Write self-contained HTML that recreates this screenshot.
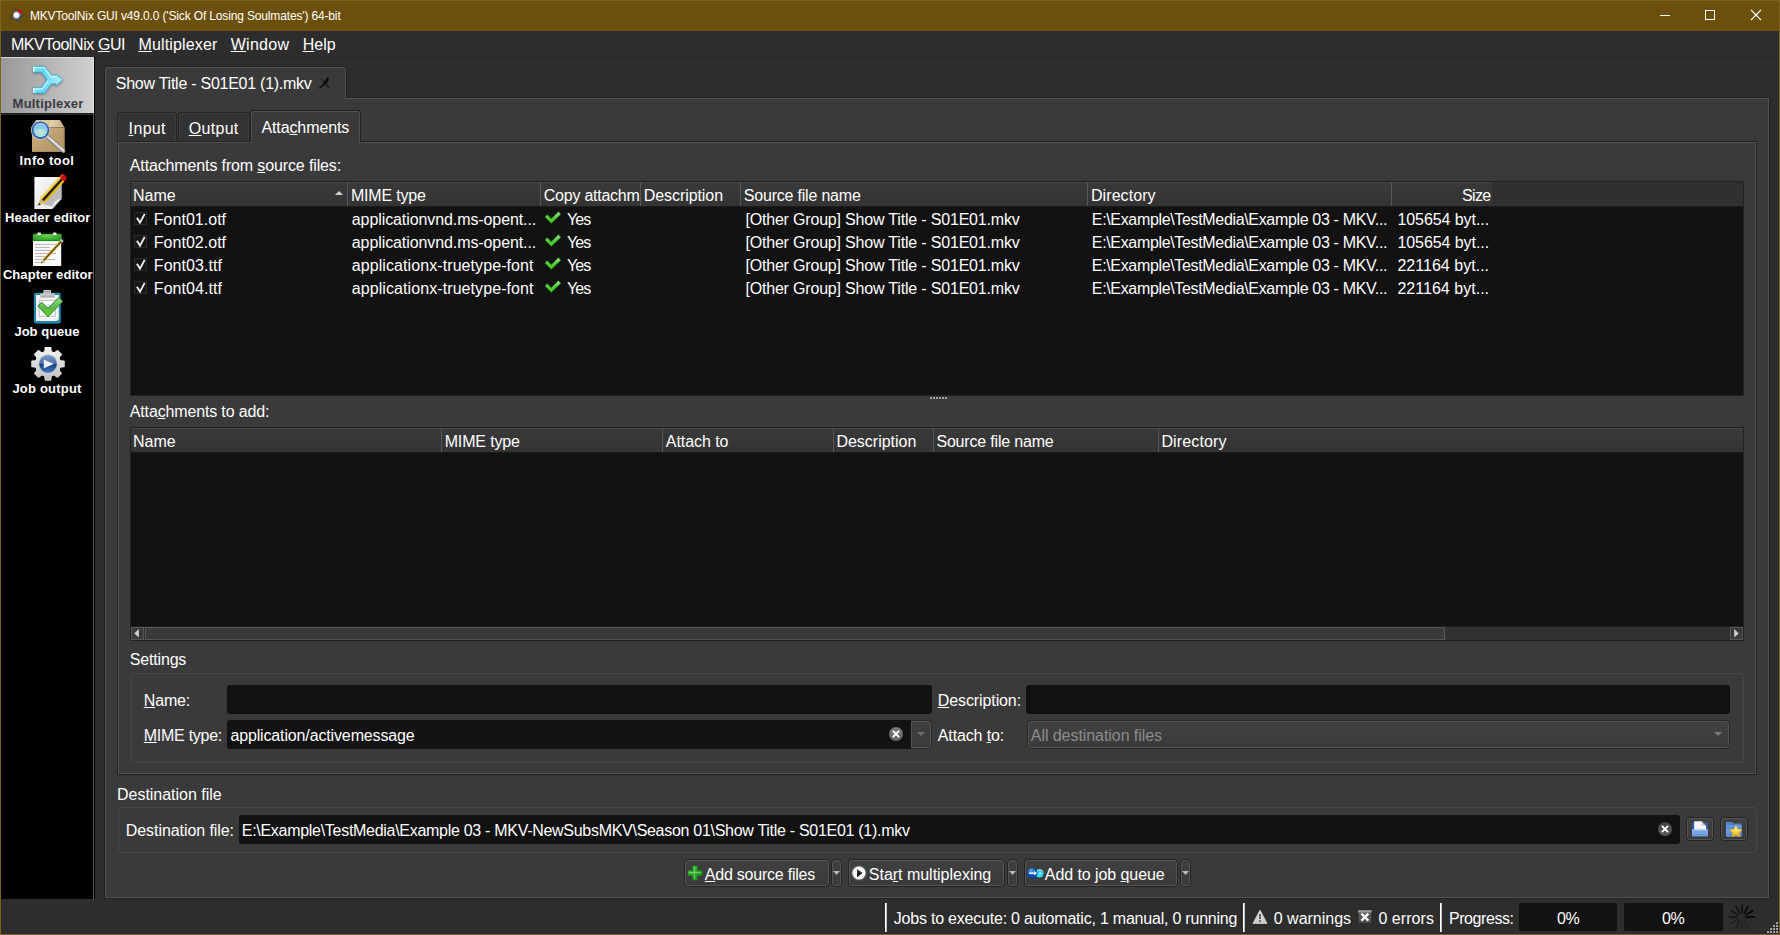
<!DOCTYPE html>
<html><head><meta charset="utf-8"><title>MKVToolNix GUI</title>
<style>

html,body{margin:0;padding:0;background:#2d2d2d;}
body{width:1780px;height:935px;overflow:hidden;font-family:"Liberation Sans",sans-serif;}
#win{position:relative;width:1780px;height:935px;overflow:hidden;background:#2d2d2d;}
#win div{position:absolute;box-sizing:border-box;}
#win svg{position:absolute;overflow:visible;}
.t{white-space:nowrap;line-height:20px;height:20px;}
u{text-decoration:underline;text-underline-offset:1px;text-decoration-thickness:1px;}
.pane{background:#3a3a3a;border:1px solid #232323;box-shadow:inset 0 0 0 1px #505050;}
.tbl{background:#121212;border:1px solid #222;}
.hd{background:linear-gradient(#393939,#343434);border-top:1px solid #474747;}
.sep{width:1px;background:#565656;}
.inp{background:#121212;border-radius:3px;}
.btn{background:linear-gradient(#404040,#3a3a3a);border:1px solid #242424;border-radius:4px;box-shadow:inset 0 0 0 1px #555;}
.gb{border:1px solid #474747;border-radius:3px;}

</style></head><body>
<div id="win">
<div style="left:0px;top:0px;width:1780px;height:935px;background:#7d6120;"></div>
<div style="left:1px;top:1px;width:1778px;height:30px;background:#6c4f0a;"></div>
<div style="left:1px;top:31px;width:1778px;height:903px;background:#2d2d2d;"></div>
<div style="left:1px;top:56px;width:1778px;height:1px;background:#282828;"></div>
<svg style="left:8px;top:6px" width="18" height="18" viewBox="0 0 18 18">
<ellipse cx="9" cy="9.5" rx="3.2" ry="7" fill="none" stroke="#4a4432" stroke-width="1" transform="rotate(-20 9 9.5)"/>
<ellipse cx="9" cy="9.5" rx="7.5" ry="3" fill="none" stroke="#4a4432" stroke-width="1" transform="rotate(-18 9 9.5)"/>
<defs><radialGradient id="ball" cx="0.4" cy="0.45" r="0.6"><stop offset="0" stop-color="#fff"/><stop offset="0.400" stop-color="#fff"/><stop offset="0.720" stop-color="#8c9adc"/><stop offset="1" stop-color="#222c78"/></radialGradient></defs>
<circle cx="9.100" cy="9.400" r="4" fill="url(#ball)"/>
<circle cx="12" cy="5.3" r="1.9" fill="#e00000"/>
</svg>
<div style="left:1660px;top:15px;width:10px;height:1px;background:#fff;"></div>
<div style="left:1705px;top:10px;width:10px;height:10px;border:1px solid #fff;"></div>
<svg style="left:1751px;top:10px" width="10" height="10" viewBox="0 0 10 10"><path d="M0 0L10 10M10 0L0 10" stroke="#fff" stroke-width="1.1" fill="none"/></svg>
<div style="left:1px;top:57px;width:94px;height:842px;background:#000;"></div>
<div style="left:93px;top:57px;width:1px;height:843px;background:#555;"></div>
<div style="left:1px;top:57px;width:93px;height:56px;background:linear-gradient(90deg,#989898,#d0d0d0);border-top:1px solid #d8d8d8;border-right:1px solid #e6e6e6;"></div>
<div style="left:1px;top:113px;width:92px;height:2px;background:linear-gradient(#151515,#303030);"></div>
<svg style="left:32px;top:63px;filter:drop-shadow(0 1px 0.800px rgba(40,40,40,0.450))" width="32" height="32" viewBox="0 0 32 32">
<defs><linearGradient id="mx" x1="0" y1="0" x2="1" y2="0"><stop offset="0" stop-color="#7fe0f9"/><stop offset="0.350" stop-color="#5ed6f7"/><stop offset="0.600" stop-color="#86e2f9"/><stop offset="1" stop-color="#b4eefb"/></linearGradient></defs>
<path d="M1.400 3.300H12.400L19.400 12.300H23.900V10.800L30.700 16.700L23.900 22.700V20.800H19.400L12.400 30.100H1.400V24.700H9.400L15.200 16.700L9.400 9.100H1.400Z" fill="url(#mx)" stroke="#3cb7e0" stroke-width="0.900" stroke-linejoin="round"/>
<path d="M2.200 4.700H12L18.800 13.500H24.300" fill="none" stroke="#d4f6fd" stroke-width="1.300" opacity="0.850"/>
<path d="M2.200 26H10.200L16.200 17.800" fill="none" stroke="#d4f6fd" stroke-width="1.300" opacity="0.850"/>
<path d="M1.700 3.600v5.200M1.700 25v4.800" stroke="#f0fcff" stroke-width="1.300"/>
</svg>
<svg style="left:30px;top:118px" width="36" height="36" viewBox="30 118 36 36">
<defs>
<linearGradient id="bxf" x1="0" y1="0" x2="1" y2="1"><stop offset="0" stop-color="#c9ad83"/><stop offset="1" stop-color="#b3935f"/></linearGradient>
<linearGradient id="bxt" x1="0" y1="0" x2="1" y2="0"><stop offset="0" stop-color="#cdb58e"/><stop offset="0.6" stop-color="#e2cfae"/><stop offset="1" stop-color="#c8ab7e"/></linearGradient>
<radialGradient id="lens" cx="0.5" cy="0.65" r="0.6"><stop offset="0" stop-color="#c9e8c8"/><stop offset="0.5" stop-color="#a4dde0"/><stop offset="1" stop-color="#7cc4e8"/></radialGradient>
<linearGradient id="hnd" x1="0" y1="0" x2="1" y2="0"><stop offset="0" stop-color="#8d8d8d"/><stop offset="0.5" stop-color="#f0f0f0"/><stop offset="1" stop-color="#9a9a9a"/></linearGradient>
</defs>
<path d="M36 120H60L64.500 127.600H32Z" fill="url(#bxt)"/>
<rect x="32" y="127.600" width="32.500" height="24.300" fill="url(#bxf)"/>
<path d="M46.800 120h2.200l0.400 7.600h-3z" fill="#e2c867" opacity="0.800"/>
<path d="M63.600 127.600h0.900v24.300h-0.900z" fill="#a98a58"/>
<line x1="48" y1="137.300" x2="63.400" y2="150.800" stroke="#777" stroke-width="4.200" stroke-linecap="round"/>
<line x1="48" y1="137.300" x2="63.400" y2="150.800" stroke="#cdcdcd" stroke-width="2.700" stroke-linecap="round"/>
<line x1="48.700" y1="136.900" x2="64" y2="150.300" stroke="#f6f6f6" stroke-width="1"/>
<circle cx="40.500" cy="130.200" r="9.600" fill="#c4c6cc"/>
<circle cx="40.500" cy="130.200" r="8.700" fill="#2f57a6"/>
<circle cx="40.500" cy="130.200" r="7.100" fill="url(#lens)"/>
<path d="M33.600 128.800a7.100 7.100 0 0 1 13.800 0z" fill="#86c2ee" opacity="0.900"/>
<path d="M34.800 126.500a7 7 0 0 1 11.400 0" fill="none" stroke="#cfe8fa" stroke-width="0.800" opacity="0.700"/>
</svg>
<svg style="left:30px;top:172px" width="38" height="40" viewBox="30 172 38 40">
<defs>
<linearGradient id="pp" x1="0" y1="0" x2="1" y2="1"><stop offset="0" stop-color="#ffffff"/><stop offset="0.5" stop-color="#e9e9e9"/><stop offset="1" stop-color="#f8f8f8"/></linearGradient>
<linearGradient id="fold" x1="0" y1="0" x2="1" y2="1"><stop offset="0" stop-color="#ffffff"/><stop offset="1" stop-color="#bdbdbd"/></linearGradient>
</defs>
<path d="M34.400 177H61.600V198.800L52.200 209H34.400Z" fill="url(#pp)"/>
<path d="M61.600 198.800C57 199.500 53.500 201 52.200 209C53 204 54 201.500 61.600 198.800Z" fill="#999"/>
<path d="M61.600 198.600C56 199 53 201 52.200 209L61.600 198.600Z" fill="url(#fold)"/>
<path d="M43 204.500L60.800 184L61.200 198.500C56 199.500 53.500 201.500 52.600 206.500Z" fill="#8a8a8a" opacity="0.500"/>
<g transform="translate(38.100 205.600) rotate(-48)">
<path d="M0 0L7 -3.200V3.200Z" fill="#d9b76a"/>
<path d="M0 0L2.600 -1.200V1.200Z" fill="#2a2620"/>
<rect x="7" y="-3.400" width="28.500" height="6.800" fill="#efb912"/>
<rect x="7" y="-3.400" width="28.500" height="1.700" fill="#f8d654"/>
<rect x="7" y="-1.200" width="28.500" height="2.500" fill="#222228"/>
<path d="M35.500 -3.400h2.600c1.900 0 2.500 1.500 2.500 3.400s-0.600 3.400 -2.500 3.400h-2.600z" fill="#d00808"/>
<path d="M35.500 -3.400h2.600c1.200 0 2 0.600 2.300 1.600h-4.900z" fill="#ee4a3a"/>
</g>
</svg>
<svg style="left:30px;top:229px" width="38" height="40" viewBox="30 229 38 40">
<defs>
<radialGradient id="grn" cx="0.5" cy="0.3" r="0.7"><stop offset="0" stop-color="#6fd04a"/><stop offset="1" stop-color="#1f9a1f"/></radialGradient>
</defs>
<rect x="33" y="234" width="28.200" height="32" fill="#fafafa"/>
<rect x="33" y="233.800" width="28.200" height="7.200" fill="url(#grn)"/>
<rect x="33" y="240.300" width="28.200" height="0.800" fill="#178a17"/>
<rect x="35" y="243.9" width="21" height="1" fill="#b4b4b4"/><rect x="35" y="246.9" width="15" height="1" fill="#b4b4b4"/><rect x="35" y="249.9" width="16" height="1" fill="#b4b4b4"/><rect x="35" y="253.0" width="21" height="1" fill="#b4b4b4"/><rect x="35" y="255.9" width="10" height="1" fill="#b4b4b4"/><rect x="35" y="259.0" width="20" height="1" fill="#b4b4b4"/><rect x="35" y="261.9" width="9.5" height="1" fill="#b4b4b4"/>
<rect x="37.400" y="232.600" width="3.600" height="3.400" rx="0.800" fill="#e8e0e8"/><rect x="52.900" y="232.600" width="3.600" height="3.400" rx="0.800" fill="#e8e0e8"/>
<rect x="37.400" y="235.400" width="3.600" height="1" fill="#2f8a2f"/><rect x="52.900" y="235.400" width="3.600" height="1" fill="#2f8a2f"/>
<g transform="translate(40.700 263.600) rotate(-47.200)">
<path d="M0 0L4.500 -1.400V1.400Z" fill="#d9b76a"/>
<path d="M0 0L2 -0.700V0.700Z" fill="#222"/>
<rect x="4.500" y="-1.500" width="26.500" height="3" fill="#e8b21c"/>
<rect x="4.500" y="-0.500" width="26.500" height="1" fill="#2a2a2a"/>
<rect x="30.500" y="-1.600" width="1.800" height="3.200" fill="#cfcfcf"/>
<rect x="32.300" y="-1.600" width="2.200" height="3.200" rx="0.800" fill="#1a1a1a"/>
</g>
</svg>
<svg style="left:30px;top:286px" width="38" height="40" viewBox="30 286 38 40">
<defs>
<linearGradient id="chk" x1="0" y1="0" x2="0" y2="1"><stop offset="0" stop-color="#9bdc8c"/><stop offset="0.55" stop-color="#58b848"/><stop offset="1" stop-color="#5fd420"/></linearGradient>
<linearGradient id="clp" x1="0" y1="0" x2="0" y2="1"><stop offset="0" stop-color="#d8d8d8"/><stop offset="1" stop-color="#a0a0a0"/></linearGradient>
</defs>
<rect x="33.900" y="292.800" width="26.800" height="30.600" rx="1.800" fill="#1b80a6"/>
<rect x="34.600" y="293.500" width="25.400" height="29.200" rx="1.400" fill="none" stroke="#2e9cc4" stroke-width="0.700"/>
<path d="M36 295H58.800V318C58.800 320 58 321 56 321H36Z" fill="#f3f3f3"/>
<path d="M58.800 316.500C58.500 319 57.500 320.600 54.500 321H56.800L58.800 319Z" fill="#c8c8c8"/>
<rect x="39.300" y="300.300" width="16" height="16" fill="#fbfbfb" stroke="#b3bac2" stroke-width="0.900"/>
<rect x="40.200" y="293.500" width="14.400" height="4" rx="0.600" fill="url(#clp)"/>
<rect x="43.300" y="290" width="7.700" height="4" rx="0.800" fill="#c4c4c4"/>
<rect x="44.300" y="291" width="5.700" height="1.200" fill="#9a9a9a"/>
<path d="M37.900 306L41.600 302.200L48 308.200L58.800 297.500L62.800 301.300L48 316.800Z" fill="url(#chk)" stroke="#27851c" stroke-width="1" stroke-linejoin="round"/>
</svg>
<svg style="left:30px;top:345px" width="36" height="38" viewBox="30 345 36 38">
<defs>
<linearGradient id="gr" x1="0" y1="0" x2="0" y2="1"><stop offset="0" stop-color="#f0f0f0"/><stop offset="1" stop-color="#c4c4c4"/></linearGradient>
<linearGradient id="bl" x1="0" y1="0" x2="0" y2="1"><stop offset="0" stop-color="#7f9cc8"/><stop offset="0.500" stop-color="#4a6ca8"/><stop offset="0.520" stop-color="#173f80"/><stop offset="1" stop-color="#3f78c0"/></linearGradient>
</defs>
<path d="M44.84 352.01L45.42 347.91L50.58 347.91L51.16 352.01L54.17 353.26L57.48 350.77L61.13 354.42L58.64 357.73L59.89 360.74L63.99 361.32L63.99 366.48L59.89 367.06L58.64 370.07L61.13 373.38L57.48 377.03L54.17 374.54L51.16 375.79L50.58 379.89L45.42 379.89L44.84 375.79L41.83 374.54L38.52 377.03L34.87 373.38L37.36 370.07L36.11 367.06L32.01 366.48L32.01 361.32L36.11 360.74L37.36 357.73L34.87 354.42L38.52 350.77L41.83 353.26Z" fill="url(#gr)" stroke="url(#gr)" stroke-width="1.600" stroke-linejoin="round"/>
<circle cx="48.0" cy="363.9" r="12.800" fill="url(#gr)"/>
<circle cx="48.0" cy="363.9" r="9.700" fill="#cfcfcf"/>
<circle cx="48.0" cy="363.9" r="8.900" fill="url(#bl)"/>
<path d="M44.200 360.200V367.700L52.900 363.900Z" fill="#f4f4f4" stroke="#f4f4f4" stroke-width="0.800" stroke-linejoin="round"/>
</svg>
<div style="left:104px;top:97px;width:1666px;height:802px;"></div>
<div class="pane" style="left:104px;top:97px;width:1666px;height:802px;"></div>
<div style="left:104px;top:66px;width:243px;height:32px;background:#3a3a3a;border:1px solid #232323;border-bottom:none;border-radius:3px 3px 0 0;box-shadow:inset 1px 1px 0 #505050,inset -1px 0 0 #505050;"></div>
<div style="left:106px;top:97px;width:239px;height:2px;background:#3a3a3a;"></div>
<div style="left:105px;top:97px;width:1px;height:2px;background:#505050;"></div>
<div style="left:345px;top:97px;width:1px;height:1px;background:#505050;"></div>
<svg style="left:316px;top:75px" width="16" height="16" viewBox="316 75 16 16"><path d="M319.600 77.200C322.200 80.200 325.600 84.600 327.400 87.400C328.400 88.600 330.200 87.800 329.400 86.400C327.600 83.800 323.200 79.800 319.600 77.200Z" fill="#1e1e1e"/><path d="M317.900 88.700C321.200 86.400 325.200 82 326.800 78C327.600 76.800 329.200 77.400 328.800 78.900C327.400 83.200 322.600 87.200 317.900 88.700Z" fill="#050505"/></svg>
<div class="pane" style="left:117px;top:141px;width:1640px;height:634px;"></div>
<div style="left:117px;top:112px;width:60px;height:29px;background:#333;border:1px solid #232323;border-bottom:none;border-radius:3px 3px 0 0;box-shadow:inset 1px 1px 0 #3f3f3f,inset -1px 0 0 #3f3f3f;"></div>
<div style="left:178px;top:112px;width:72px;height:29px;background:#333;border:1px solid #232323;border-bottom:none;border-radius:3px 3px 0 0;box-shadow:inset 1px 1px 0 #3f3f3f,inset -1px 0 0 #3f3f3f;"></div>
<div style="left:250px;top:110px;width:111px;height:32px;background:#3a3a3a;border:1px solid #232323;border-bottom:none;border-radius:3px 3px 0 0;box-shadow:inset 1px 1px 0 #505050,inset -1px 0 0 #505050;"></div>
<div style="left:252px;top:141px;width:107px;height:2px;background:#3a3a3a;"></div>
<div style="left:251px;top:141px;width:1px;height:2px;background:#505050;"></div>
<div style="left:359px;top:141px;width:1px;height:1px;background:#505050;"></div>
<div class="tbl" style="left:130px;top:181px;width:1614px;height:215px;"></div>
<div style="left:131px;top:182px;width:1612px;height:24px;background:#303030;"></div>
<div class="hd" style="left:131px;top:182px;width:1361px;height:24px;"></div>
<div style="left:131px;top:206px;width:1612px;height:1px;background:#1b1b1b;"></div>
<div class="sep" style="left:347px;top:182px;height:24px;"></div>
<div class="sep" style="left:540px;top:182px;height:24px;"></div>
<div class="sep" style="left:640px;top:182px;height:24px;"></div>
<div class="sep" style="left:740px;top:182px;height:24px;"></div>
<div class="sep" style="left:1087px;top:182px;height:24px;"></div>
<div class="sep" style="left:1391px;top:182px;height:24px;"></div>
<svg style="left:335px;top:191px" width="8" height="4" viewBox="0 0 8 4"><path d="M0 4L4 0L8 4Z" fill="#d2d2d2"/></svg>
<svg width="0" height="0" style="left:0;top:0"><defs><linearGradient id="ckg" x1="0" y1="0" x2="0" y2="1"><stop offset="0" stop-color="#a4e496"/><stop offset="0.550" stop-color="#52c83a"/><stop offset="1" stop-color="#3ed412"/></linearGradient></defs></svg>
<div style="left:134px;top:212px;width:13px;height:13px;border:1px solid #2c2c2c;background:#161616;"></div>
<svg style="left:136px;top:212px" width="10" height="12" viewBox="0 0 10 12"><path d="M0.900 5.800L4 10.600L8.700 1.900" stroke="#ececec" stroke-width="1.900" fill="none"/></svg>
<svg style="left:544px;top:211px" width="18" height="14" viewBox="544 211 18 14"><path d="M545.100 217.100L547.200 214.700L551.300 218.800L558.400 211.800L560.800 214.200L551.300 223.200Z" fill="url(#ckg)" stroke="#1f9414" stroke-width="0.700" stroke-linejoin="round"/></svg>
<div style="left:134px;top:235px;width:13px;height:13px;border:1px solid #2c2c2c;background:#161616;"></div>
<svg style="left:136px;top:235px" width="10" height="12" viewBox="0 0 10 12"><path d="M0.900 5.800L4 10.600L8.700 1.900" stroke="#ececec" stroke-width="1.900" fill="none"/></svg>
<svg style="left:544px;top:234px" width="18" height="14" viewBox="544 211 18 14"><path d="M545.100 217.100L547.200 214.700L551.300 218.800L558.400 211.800L560.800 214.200L551.300 223.200Z" fill="url(#ckg)" stroke="#1f9414" stroke-width="0.700" stroke-linejoin="round"/></svg>
<div style="left:134px;top:258px;width:13px;height:13px;border:1px solid #2c2c2c;background:#161616;"></div>
<svg style="left:136px;top:258px" width="10" height="12" viewBox="0 0 10 12"><path d="M0.900 5.800L4 10.600L8.700 1.900" stroke="#ececec" stroke-width="1.900" fill="none"/></svg>
<svg style="left:544px;top:257px" width="18" height="14" viewBox="544 211 18 14"><path d="M545.100 217.100L547.200 214.700L551.300 218.800L558.400 211.800L560.800 214.200L551.300 223.200Z" fill="url(#ckg)" stroke="#1f9414" stroke-width="0.700" stroke-linejoin="round"/></svg>
<div style="left:134px;top:281px;width:13px;height:13px;border:1px solid #2c2c2c;background:#161616;"></div>
<svg style="left:136px;top:281px" width="10" height="12" viewBox="0 0 10 12"><path d="M0.900 5.800L4 10.600L8.700 1.900" stroke="#ececec" stroke-width="1.900" fill="none"/></svg>
<svg style="left:544px;top:280px" width="18" height="14" viewBox="544 211 18 14"><path d="M545.100 217.100L547.200 214.700L551.300 218.800L558.400 211.800L560.800 214.200L551.300 223.200Z" fill="url(#ckg)" stroke="#1f9414" stroke-width="0.700" stroke-linejoin="round"/></svg>
<div style="left:930px;top:397px;width:2px;height:2px;background:linear-gradient(135deg,#8a8a8a,#b4b4b4);"></div>
<div style="left:933px;top:397px;width:2px;height:2px;background:linear-gradient(135deg,#8a8a8a,#b4b4b4);"></div>
<div style="left:936px;top:397px;width:2px;height:2px;background:linear-gradient(135deg,#8a8a8a,#b4b4b4);"></div>
<div style="left:939px;top:397px;width:2px;height:2px;background:linear-gradient(135deg,#8a8a8a,#b4b4b4);"></div>
<div style="left:942px;top:397px;width:2px;height:2px;background:linear-gradient(135deg,#8a8a8a,#b4b4b4);"></div>
<div style="left:945px;top:397px;width:2px;height:2px;background:linear-gradient(135deg,#8a8a8a,#b4b4b4);"></div>
<div class="tbl" style="left:130px;top:427px;width:1614px;height:214px;"></div>
<div class="hd" style="left:131px;top:428px;width:1612px;height:24px;"></div>
<div style="left:131px;top:452px;width:1612px;height:1px;background:#1b1b1b;"></div>
<div class="sep" style="left:441px;top:428px;height:24px;"></div>
<div class="sep" style="left:662px;top:428px;height:24px;"></div>
<div class="sep" style="left:833px;top:428px;height:24px;"></div>
<div class="sep" style="left:933px;top:428px;height:24px;"></div>
<div class="sep" style="left:1158px;top:428px;height:24px;"></div>
<div style="left:131px;top:626px;width:1612px;height:14px;background:#313131;border-top:1px solid #1d1d1d;"></div>
<div style="left:131px;top:627px;width:13px;height:13px;background:#3a3a3a;border:1px solid #575757;"></div>
<div style="left:1730px;top:627px;width:13px;height:13px;background:#3a3a3a;border:1px solid #575757;"></div>
<div style="left:145px;top:627px;width:1300px;height:13px;background:#3a3a3a;border:1px solid #575757;"></div>
<svg style="left:134px;top:629px" width="5" height="9" viewBox="0 0 5 9"><path d="M4.800 0L0.300 4.400L4.800 8.600Z" fill="#d2d2d2"/></svg>
<svg style="left:1734px;top:629px" width="5" height="9" viewBox="0 0 5 9"><path d="M0.200 0L4.700 4.400L0.200 8.600Z" fill="#d2d2d2"/></svg>
<div class="gb" style="left:131px;top:673px;width:1613px;height:90px;"></div>
<div class="inp" style="left:227px;top:685px;width:705px;height:29px;"></div>
<div class="inp" style="left:1026px;top:685px;width:704px;height:29px;"></div>
<div class="inp" style="left:227px;top:720px;width:685px;height:29px;border-radius:3px 0 0 3px;"></div>
<div style="left:911px;top:720px;width:21px;height:29px;background:linear-gradient(#404040,#3a3a3a);border:1px solid #2a2a2a;border-left:none;border-radius:0 4px 4px 0;box-shadow:inset -1px 0 0 #555,inset 0 1px 0 #555,inset 0 -1px 0 #555,inset 1px 0 0 #555;"></div>
<svg style="left:917px;top:732px" width="8" height="4" viewBox="0 0 8 4"><path d="M0 0L8 0L4 4Z" fill="#6e6e6e"/></svg>
<svg style="left:889px;top:727px" width="14" height="14" viewBox="0 0 14 14"><defs><linearGradient id="cg1" x1="0" y1="0" x2="0" y2="1"><stop offset="0" stop-color="#7a7a7a"/><stop offset="1" stop-color="#666"/></linearGradient></defs><circle cx="7" cy="7" r="7" fill="url(#cg1)"/><path d="M3.900 3.900L10.100 10.100M10.100 3.900L3.900 10.100" stroke="#fff" stroke-width="1.900"/></svg>
<div style="left:1027px;top:720px;width:703px;height:29px;background:linear-gradient(#414141,#3a3a3a);border:1px solid #282828;border-radius:4px;box-shadow:inset 0 0 0 1px #545454;"></div>
<svg style="left:1714px;top:732px" width="8" height="4" viewBox="0 0 8 4"><path d="M0 0L8 0L4 4Z" fill="#7a7a7a"/></svg>
<div class="gb" style="left:118px;top:807px;width:1639px;height:46px;"></div>
<div class="inp" style="left:239px;top:815px;width:1441px;height:29px;"></div>
<svg style="left:1658px;top:822px" width="14" height="14" viewBox="0 0 14 14"><defs><linearGradient id="cg2" x1="0" y1="0" x2="0" y2="1"><stop offset="0" stop-color="#444"/><stop offset="1" stop-color="#5a5a5a"/></linearGradient></defs><circle cx="7" cy="7" r="7" fill="url(#cg2)"/><path d="M3.900 3.900L10.100 10.100M10.100 3.900L3.900 10.100" stroke="#fff" stroke-width="1.900"/></svg>
<div class="btn" style="left:1686px;top:817px;width:28px;height:24px;"></div>
<div class="btn" style="left:1720px;top:817px;width:28px;height:24px;"></div>
<svg style="left:1691px;top:820px" width="18" height="18" viewBox="1691 820 18 18"><defs><linearGradient id="fo" x1="0" y1="0" x2="0" y2="1"><stop offset="0" stop-color="#9cc0ee"/><stop offset="1" stop-color="#6f9fe0"/></linearGradient></defs><path d="M1692.200 822.500h15.600v13.800h-15.600z" fill="#2f5fb0"/><path d="M1694.200 821.300h7.600l4.200 4.300v5.400h-11.800z" fill="#f4f4f4"/><path d="M1701.800 821.300l4.200 4.300h-4.200z" fill="#c9c9c9"/><path d="M1701.800 821.300l4.200 4.300" stroke="#333" stroke-width="0.500"/><rect x="1692" y="829.400" width="16" height="7" fill="url(#fo)"/><rect x="1692" y="831.600" width="16" height="0.800" fill="#5c8ad0"/><rect x="1692" y="834" width="16" height="0.800" fill="#5c8ad0"/></svg>
<svg style="left:1725px;top:820px" width="18" height="18" viewBox="1725 820 18 18"><defs><linearGradient id="st" x1="0" y1="0" x2="0" y2="1"><stop offset="0" stop-color="#fff6d0"/><stop offset="0.500" stop-color="#ffd84a"/><stop offset="1" stop-color="#f0a400"/></linearGradient></defs><path d="M1726 822h6.500l1 1.400h8v13h-15.500z" fill="#4f80cc"/><rect x="1726" y="825.400" width="15.500" height="11" fill="#6c9ade"/><rect x="1726" y="827.600" width="15.500" height="0.800" fill="#4f80cc"/><rect x="1726" y="834" width="15.500" height="0.800" fill="#4f80cc"/><path d="M1735.900 825.200l1.900 3.900l4.300 0.600l-3.100 3l0.700 4.300l-3.800-2l-3.800 2l0.700-4.300l-3.100-3l4.300-0.600z" fill="url(#st)" stroke="#e8a800" stroke-width="0.500"/></svg>
<div class="btn" style="left:684px;top:859px;width:146px;height:28px;"></div>
<div class="btn" style="left:831px;top:859px;width:11px;height:28px;"></div>
<svg style="left:833.0px;top:871px" width="7" height="4" viewBox="0 0 7 4"><path d="M0 0L7 0L3.5 4Z" fill="#b8b8b8"/></svg>
<div class="btn" style="left:848px;top:859px;width:157px;height:28px;"></div>
<div class="btn" style="left:1007px;top:859px;width:11px;height:28px;"></div>
<svg style="left:1009.0px;top:871px" width="7" height="4" viewBox="0 0 7 4"><path d="M0 0L7 0L3.5 4Z" fill="#b8b8b8"/></svg>
<div class="btn" style="left:1024px;top:859px;width:154px;height:28px;"></div>
<div class="btn" style="left:1180px;top:859px;width:11px;height:28px;"></div>
<svg style="left:1182.0px;top:871px" width="7" height="4" viewBox="0 0 7 4"><path d="M0 0L7 0L3.5 4Z" fill="#b8b8b8"/></svg>
<svg style="left:687px;top:865px" width="16" height="16" viewBox="687 865 16 16"><defs><linearGradient id="pl" x1="0" y1="0" x2="1" y2="1"><stop offset="0" stop-color="#49c43f"/><stop offset="1" stop-color="#0f8f0f"/></linearGradient></defs><path d="M692.800 866h4.400v4.800h4.800v4.400h-4.800v4.800h-4.400v-4.800h-4.800v-4.400h4.800z" fill="url(#pl)" stroke="#1d9a1d" stroke-width="0.600" stroke-linejoin="round"/><path d="M694.400 867v11.800M689 872.500h11.800" stroke="#8fe27f" stroke-width="1" opacity="0.700" fill="none"/></svg>
<svg style="left:851px;top:865px" width="16" height="16" viewBox="851 865 16 16"><defs><linearGradient id="pt" x1="0" y1="0" x2="0" y2="1"><stop offset="0" stop-color="#6a6a6a"/><stop offset="0.500" stop-color="#222"/><stop offset="1" stop-color="#000"/></linearGradient></defs><circle cx="859" cy="873" r="7.600" fill="#6c6c6c"/><circle cx="859" cy="873" r="6.500" fill="#fdfdfd"/><path d="M857 868.800v8.400l5.600-4.200z" fill="url(#pt)"/></svg>
<svg style="left:1026px;top:866px" width="18" height="14" viewBox="1026 866 18 14"><defs><radialGradient id="q1" cx="0.400" cy="0.250" r="0.800"><stop offset="0" stop-color="#6aa6ea"/><stop offset="0.500" stop-color="#0a58c0"/><stop offset="1" stop-color="#06399a"/></radialGradient><radialGradient id="q2" cx="0.500" cy="0.800" r="0.800"><stop offset="0" stop-color="#30f0ff"/><stop offset="0.600" stop-color="#28c4e4"/><stop offset="1" stop-color="#9adcf0"/></radialGradient></defs><circle cx="1039.400" cy="873.300" r="4.300" fill="url(#q2)"/><circle cx="1032.200" cy="873.200" r="5.200" fill="url(#q1)"/><path d="M1029 872.600h5v-1.600l3.200 2.300l-3.200 2.300v-1.600h-5z" fill="#fff"/><rect x="1039.200" y="872.600" width="2" height="1.300" fill="#eaffff"/></svg>
<div style="left:885px;top:903px;width:2px;height:29px;background:linear-gradient(90deg,#fff 50%,#c4c4c4 50%);"></div>
<div style="left:1243px;top:903px;width:2px;height:29px;background:linear-gradient(90deg,#fff 50%,#c4c4c4 50%);"></div>
<div style="left:1440px;top:903px;width:2px;height:29px;background:linear-gradient(90deg,#fff 50%,#c4c4c4 50%);"></div>
<svg style="left:1252px;top:909px" width="16" height="16" viewBox="1252 909 16 16"><defs><linearGradient id="wg" x1="0" y1="0" x2="0" y2="1"><stop offset="0" stop-color="#f0f0f0"/><stop offset="1" stop-color="#c6c6c6"/></linearGradient></defs><path d="M1260 910.200L1267 923.400H1253Z" fill="url(#wg)" stroke="#d8d8d8" stroke-width="0.800" stroke-linejoin="round"/><rect x="1259.200" y="914" width="1.700" height="5" fill="#4a4a4a"/><rect x="1259.200" y="920.200" width="1.700" height="1.700" fill="#4a4a4a"/></svg>
<svg style="left:1358px;top:910px" width="14" height="14" viewBox="1358 910 14 14"><defs><linearGradient id="eg" x1="0" y1="0" x2="0" y2="1"><stop offset="0" stop-color="#666"/><stop offset="1" stop-color="#484848"/></linearGradient></defs><rect x="1358.200" y="910.200" width="13.400" height="13.200" rx="1" fill="url(#eg)" stroke="#262626" stroke-width="0.600"/><rect x="1358.200" y="910.200" width="13.400" height="2.200" fill="#9c9c9c"/><path d="M1361.400 913.600l7 7M1368.400 913.600l-7 7" stroke="#fff" stroke-width="2.200"/></svg>
<svg style="left:1728px;top:903px" width="28" height="28" viewBox="1728 903 28 28"><line x1="1746.30" y1="917.00" x2="1754.40" y2="917.00" stroke="#000" stroke-opacity="1.00" stroke-width="1.600" stroke-linecap="round"/><line x1="1745.72" y1="914.85" x2="1752.74" y2="910.80" stroke="#000" stroke-opacity="0.92" stroke-width="1.600" stroke-linecap="round"/><line x1="1744.15" y1="913.28" x2="1748.20" y2="906.26" stroke="#000" stroke-opacity="0.83" stroke-width="1.600" stroke-linecap="round"/><line x1="1742.00" y1="912.70" x2="1742.00" y2="904.60" stroke="#000" stroke-opacity="0.74" stroke-width="1.600" stroke-linecap="round"/><line x1="1739.85" y1="913.28" x2="1735.80" y2="906.26" stroke="#000" stroke-opacity="0.66" stroke-width="1.600" stroke-linecap="round"/><line x1="1738.28" y1="914.85" x2="1731.26" y2="910.80" stroke="#000" stroke-opacity="0.57" stroke-width="1.600" stroke-linecap="round"/><line x1="1737.70" y1="917.00" x2="1729.60" y2="917.00" stroke="#000" stroke-opacity="0.49" stroke-width="1.600" stroke-linecap="round"/><line x1="1738.28" y1="919.15" x2="1731.26" y2="923.20" stroke="#000" stroke-opacity="0.40" stroke-width="1.600" stroke-linecap="round"/><line x1="1739.85" y1="920.72" x2="1735.80" y2="927.74" stroke="#000" stroke-opacity="0.32" stroke-width="1.600" stroke-linecap="round"/><line x1="1742.00" y1="921.30" x2="1742.00" y2="929.40" stroke="#000" stroke-opacity="0.23" stroke-width="1.600" stroke-linecap="round"/><line x1="1744.15" y1="920.72" x2="1748.20" y2="927.74" stroke="#000" stroke-opacity="0.15" stroke-width="1.600" stroke-linecap="round"/><line x1="1745.72" y1="919.15" x2="1752.74" y2="923.20" stroke="#000" stroke-opacity="0.06" stroke-width="1.600" stroke-linecap="round"/></svg>
<div style="left:1776px;top:922px;width:2px;height:2px;background:linear-gradient(135deg,#8e8e8e,#b8b8b8);"></div>
<div style="left:1773px;top:925px;width:2px;height:2px;background:linear-gradient(135deg,#8e8e8e,#b8b8b8);"></div>
<div style="left:1776px;top:925px;width:2px;height:2px;background:linear-gradient(135deg,#8e8e8e,#b8b8b8);"></div>
<div style="left:1770px;top:928px;width:2px;height:2px;background:linear-gradient(135deg,#8e8e8e,#b8b8b8);"></div>
<div style="left:1773px;top:928px;width:2px;height:2px;background:linear-gradient(135deg,#8e8e8e,#b8b8b8);"></div>
<div style="left:1776px;top:928px;width:2px;height:2px;background:linear-gradient(135deg,#8e8e8e,#b8b8b8);"></div>
<div style="left:1767px;top:931px;width:2px;height:2px;background:linear-gradient(135deg,#8e8e8e,#b8b8b8);"></div>
<div style="left:1770px;top:931px;width:2px;height:2px;background:linear-gradient(135deg,#8e8e8e,#b8b8b8);"></div>
<div style="left:1773px;top:931px;width:2px;height:2px;background:linear-gradient(135deg,#8e8e8e,#b8b8b8);"></div>
<div style="left:1776px;top:931px;width:2px;height:2px;background:linear-gradient(135deg,#8e8e8e,#b8b8b8);"></div>
<div style="left:1519px;top:903px;width:98px;height:28px;background:#121212;border-radius:2px;"></div>
<div style="left:1624px;top:903px;width:99px;height:28px;background:#121212;border-radius:2px;"></div>
<div class="t" id="t0" style="top:6px;font-size:12px;color:#fff;left:29.9px;letter-spacing:-0.150px;">MKVToolNix GUI v49.0.0 ('Sick Of Losing Soulmates') 64-bit</div>
<div class="t" id="t1" style="top:35px;font-size:16px;color:#fff;left:10.9px;letter-spacing:-0.417px;">MKVToolNix <u>G</u>UI</div>
<div class="t" id="t2" style="top:35px;font-size:16px;color:#fff;left:138.4px;letter-spacing:0.167px;"><u>M</u>ultiplexer</div>
<div class="t" id="t3" style="top:35px;font-size:16px;color:#fff;left:230.70000000000002px;letter-spacing:0.280px;"><u>W</u>indow</div>
<div class="t" id="t4" style="top:35px;font-size:16px;color:#fff;left:302.7px;letter-spacing:-0.005px;"><u>H</u>elp</div>
<div class="t" id="t5" style="top:94px;font-size:13px;color:#3b3942;font-weight:700;left:12.6px;letter-spacing:0.216px;">Multiplexer</div>
<div class="t" id="t6" style="top:151px;font-size:13px;color:#fff;font-weight:700;left:19.599999999999998px;letter-spacing:0.370px;">Info tool</div>
<div class="t" id="t7" style="top:208px;font-size:13px;color:#fff;font-weight:700;left:5.1000000000000005px;letter-spacing:0.122px;">Header editor</div>
<div class="t" id="t8" style="top:265px;font-size:13px;color:#fff;font-weight:700;left:2.9px;letter-spacing:0.061px;">Chapter editor</div>
<div class="t" id="t9" style="top:322px;font-size:13px;color:#fff;font-weight:700;left:14.4px;letter-spacing:0.020px;">Job queue</div>
<div class="t" id="t10" style="top:379px;font-size:13px;color:#fff;font-weight:700;left:12.4px;letter-spacing:0.204px;">Job output</div>
<div class="t" id="t11" style="top:74px;font-size:16px;color:#fff;left:115.80000000000001px;letter-spacing:-0.257px;">Show Title - S01E01 (1).mkv</div>
<div class="t" id="t12" style="top:119px;font-size:16px;color:#fff;left:128.6px;letter-spacing:0.341px;"><u>I</u>nput</div>
<div class="t" id="t13" style="top:119px;font-size:16px;color:#fff;left:188.8px;letter-spacing:0.292px;"><u>O</u>utput</div>
<div class="t" id="t14" style="top:118px;font-size:16px;color:#fff;left:261.4px;letter-spacing:-0.103px;">Atta<u>c</u>hments</div>
<div class="t" id="t15" style="top:156px;font-size:16px;color:#fff;left:129.8px;letter-spacing:-0.133px;">Attachments from <u>s</u>ource files:</div>
<div class="t" id="t16" style="top:186px;font-size:16px;color:#fff;left:133.0px;letter-spacing:-0.022px;">Name</div>
<div class="t" id="t17" style="top:186px;font-size:16px;color:#fff;left:351.0px;letter-spacing:-0.208px;">MIME type</div>
<div class="t" id="t18" style="top:186px;font-size:16px;color:#fff;left:543.8px;letter-spacing:-0.243px;">Copy attachm</div>
<div class="t" id="t19" style="top:186px;font-size:16px;color:#fff;left:643.8px;letter-spacing:-0.076px;">Description</div>
<div class="t" id="t20" style="top:186px;font-size:16px;color:#fff;left:743.8px;letter-spacing:-0.204px;">Source file name</div>
<div class="t" id="t21" style="top:186px;font-size:16px;color:#fff;left:1091.0px;letter-spacing:0.065px;">Directory</div>
<div class="t" id="t22" style="top:186px;font-size:16px;color:#fff;left:1461.9px;letter-spacing:-0.606px;">Size</div>
<div class="t" id="t23" style="top:210px;font-size:16px;color:#fff;left:153.8px;letter-spacing:0.025px;">Font01.otf</div>
<div class="t" id="t24" style="top:210px;font-size:16px;color:#fff;left:351.79999999999995px;letter-spacing:-0.092px;">applicationvnd.ms-opent...</div>
<div class="t" id="t25" style="top:210px;font-size:16px;color:#fff;left:567.0px;letter-spacing:-0.970px;">Yes</div>
<div class="t" id="t26" style="top:210px;font-size:16px;color:#fff;left:745.4px;letter-spacing:-0.184px;">[Other Group] Show Title - S01E01.mkv</div>
<div class="t" id="t27" style="top:210px;font-size:16px;color:#fff;left:1091.8000000000002px;letter-spacing:-0.337px;">E:\Example\TestMedia\Example 03 - MKV...</div>
<div class="t" id="t28" style="top:210px;font-size:16px;color:#fff;left:1397.4px;letter-spacing:-0.063px;">105654 byt...</div>
<div class="t" id="t29" style="top:233px;font-size:16px;color:#fff;left:153.8px;letter-spacing:0.025px;">Font02.otf</div>
<div class="t" id="t30" style="top:233px;font-size:16px;color:#fff;left:351.79999999999995px;letter-spacing:-0.092px;">applicationvnd.ms-opent...</div>
<div class="t" id="t31" style="top:233px;font-size:16px;color:#fff;left:567.0px;letter-spacing:-0.970px;">Yes</div>
<div class="t" id="t32" style="top:233px;font-size:16px;color:#fff;left:745.4px;letter-spacing:-0.184px;">[Other Group] Show Title - S01E01.mkv</div>
<div class="t" id="t33" style="top:233px;font-size:16px;color:#fff;left:1091.8000000000002px;letter-spacing:-0.337px;">E:\Example\TestMedia\Example 03 - MKV...</div>
<div class="t" id="t34" style="top:233px;font-size:16px;color:#fff;left:1397.4px;letter-spacing:-0.063px;">105654 byt...</div>
<div class="t" id="t35" style="top:256px;font-size:16px;color:#fff;left:153.8px;letter-spacing:0.071px;">Font03.ttf</div>
<div class="t" id="t36" style="top:256px;font-size:16px;color:#fff;left:351.79999999999995px;letter-spacing:0.082px;">applicationx-truetype-font</div>
<div class="t" id="t37" style="top:256px;font-size:16px;color:#fff;left:567.0px;letter-spacing:-0.970px;">Yes</div>
<div class="t" id="t38" style="top:256px;font-size:16px;color:#fff;left:745.4px;letter-spacing:-0.184px;">[Other Group] Show Title - S01E01.mkv</div>
<div class="t" id="t39" style="top:256px;font-size:16px;color:#fff;left:1091.8000000000002px;letter-spacing:-0.337px;">E:\Example\TestMedia\Example 03 - MKV...</div>
<div class="t" id="t40" style="top:256px;font-size:16px;color:#fff;left:1397.4px;letter-spacing:0.029px;">221164 byt...</div>
<div class="t" id="t41" style="top:279px;font-size:16px;color:#fff;left:153.8px;letter-spacing:0.071px;">Font04.ttf</div>
<div class="t" id="t42" style="top:279px;font-size:16px;color:#fff;left:351.79999999999995px;letter-spacing:0.082px;">applicationx-truetype-font</div>
<div class="t" id="t43" style="top:279px;font-size:16px;color:#fff;left:567.0px;letter-spacing:-0.970px;">Yes</div>
<div class="t" id="t44" style="top:279px;font-size:16px;color:#fff;left:745.4px;letter-spacing:-0.184px;">[Other Group] Show Title - S01E01.mkv</div>
<div class="t" id="t45" style="top:279px;font-size:16px;color:#fff;left:1091.8000000000002px;letter-spacing:-0.337px;">E:\Example\TestMedia\Example 03 - MKV...</div>
<div class="t" id="t46" style="top:279px;font-size:16px;color:#fff;left:1397.4px;letter-spacing:0.029px;">221164 byt...</div>
<div class="t" id="t47" style="top:402px;font-size:16px;color:#fff;left:129.8px;letter-spacing:-0.153px;">Atta<u>c</u>hments to add:</div>
<div class="t" id="t48" style="top:432px;font-size:16px;color:#fff;left:133.0px;letter-spacing:-0.022px;">Name</div>
<div class="t" id="t49" style="top:432px;font-size:16px;color:#fff;left:444.7px;letter-spacing:-0.152px;">MIME type</div>
<div class="t" id="t50" style="top:432px;font-size:16px;color:#fff;left:665.8px;letter-spacing:-0.062px;">Attach to</div>
<div class="t" id="t51" style="top:432px;font-size:16px;color:#fff;left:836.4px;letter-spacing:-0.003px;">Description</div>
<div class="t" id="t52" style="top:432px;font-size:16px;color:#fff;left:936.4px;letter-spacing:-0.179px;">Source file name</div>
<div class="t" id="t53" style="top:432px;font-size:16px;color:#fff;left:1161.4px;letter-spacing:0.132px;">Directory</div>
<div class="t" id="t54" style="top:650px;font-size:16px;color:#fff;left:129.8px;letter-spacing:-0.177px;">Settings</div>
<div class="t" id="t55" style="top:691px;font-size:16px;color:#fff;left:143.8px;letter-spacing:-0.168px;"><u>N</u>ame:</div>
<div class="t" id="t56" style="top:726px;font-size:16px;color:#fff;left:143.8px;letter-spacing:-0.271px;"><u>M</u>IME type:</div>
<div class="t" id="t57" style="top:691px;font-size:16px;color:#fff;left:937.8px;letter-spacing:-0.107px;"><u>D</u>escription:</div>
<div class="t" id="t58" style="top:726px;font-size:16px;color:#fff;left:937.8px;letter-spacing:-0.141px;">Attach <u>t</u>o:</div>
<div class="t" id="t59" style="top:726px;font-size:16px;color:#fff;left:230.4px;letter-spacing:-0.139px;">application/activemessage</div>
<div class="t" id="t60" style="top:726px;font-size:16px;color:#8c8c8c;left:1030.8000000000002px;letter-spacing:-0.063px;">All destination files</div>
<div class="t" id="t61" style="top:785px;font-size:16px;color:#fff;left:117.0px;letter-spacing:-0.022px;">Destination file</div>
<div class="t" id="t62" style="top:821px;font-size:16px;color:#fff;left:125.80000000000001px;letter-spacing:-0.070px;">Destination file:</div>
<div class="t" id="t63" style="top:821px;font-size:16px;color:#fff;left:241.8px;letter-spacing:-0.290px;">E:\Example\TestMedia\Example 03 - MKV-NewSubsMKV\Season 01\Show Title - S01E01 (1).mkv</div>
<div class="t" id="t64" style="top:865px;font-size:16px;color:#fff;left:704.8px;letter-spacing:-0.228px;"><u>A</u>dd source files</div>
<div class="t" id="t65" style="top:865px;font-size:16px;color:#fff;left:868.8px;letter-spacing:-0.018px;">Sta<u>r</u>t multiplexing</div>
<div class="t" id="t66" style="top:865px;font-size:16px;color:#fff;left:1044.8000000000002px;letter-spacing:-0.075px;">Add to job <u>q</u>ueue</div>
<div class="t" id="t67" style="top:909px;font-size:16px;color:#fff;left:893.8px;letter-spacing:-0.216px;">Jobs to execute:  0 automatic, 1 manual, 0 running</div>
<div class="t" id="t68" style="top:909px;font-size:16px;color:#fff;left:1273.8000000000002px;letter-spacing:-0.017px;">0 warnings</div>
<div class="t" id="t69" style="top:909px;font-size:16px;color:#fff;left:1378.4px;letter-spacing:0.059px;">0 errors</div>
<div class="t" id="t70" style="top:909px;font-size:16px;color:#fff;left:1448.9px;letter-spacing:-0.419px;">Progress:</div>
<div class="t" id="t71" style="top:909px;font-size:16px;color:#fff;left:1556.9px;letter-spacing:-0.213px;">0%</div>
<div class="t" id="t72" style="top:909px;font-size:16px;color:#fff;left:1661.9px;letter-spacing:-0.213px;">0%</div>
</div>
</body></html>
